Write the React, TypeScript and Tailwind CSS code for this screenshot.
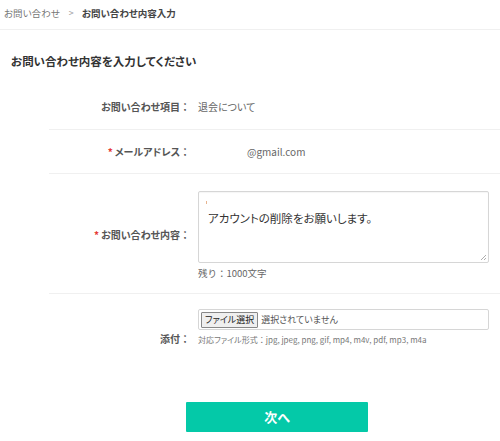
import React from "react";

function Colon() {
  return <span className="[font-feature-settings:normal]">：</span>;
}

export default function App() {
  return (
    <div className="w-[500px] h-[441px] bg-white overflow-hidden text-[#555] font-['Noto_Sans_CJK_JP','Noto_Sans',sans-serif] [font-feature-settings:'palt']">
      <div className="h-[30px] border-b border-[#f0f0f0] flex items-center pl-[4px] pb-[3px] text-[9.5px]">
        <span className="text-[#777]">お問い合わせ</span>
        <span className="text-[#999] ml-[9px] mr-[8px] text-[9px]">&gt;</span>
        <span className="font-bold text-[#444]">お問い合わせ内容入力</span>
      </div>
      <div className="h-[52px] flex items-end pl-[11px] pb-[15px]">
        <h1 className="text-[11.5px] font-bold text-[#333] leading-none">お問い合わせ内容を入力してください</h1>
      </div>
      <div className="ml-[49px]">
        <div className="h-[48px] flex items-center pt-[2px] border-b border-[#f0f0f0]">
          <div className="w-[141px] text-right text-[10px] font-bold text-[#555]">お問い合わせ項目<Colon /></div>
          <div className="ml-[8px] text-[10px] text-[#666]">退会について</div>
        </div>
        <div className="h-[44px] flex items-center border-b border-[#f0f0f0]">
          <div className="w-[141px] text-right text-[10px] font-bold text-[#555]">
            <span className="text-[#e53935] mr-[2px]">*</span>メールアドレス<Colon />
          </div>
          <div className="ml-[8px] pl-[49px] text-[10px] text-[#666]">@gmail.com</div>
        </div>
        <div className="h-[120px] flex items-center border-b border-[#f0f0f0]">
          <div className="w-[141px] text-right text-[10px] font-bold text-[#555] pt-[2px]">
            <span className="text-[#e53935] mr-[2px]">*</span>お問い合わせ内容<Colon />
          </div>
          <div className="ml-[8px] w-[291px] pt-[4px]">
            <div className="relative h-[72px] border border-[#d6d6d6] rounded-[2px] shadow-[inset_0_1px_1px_rgba(0,0,0,0.04)]">
              <div className="absolute left-[7px] top-[9px] w-[1px] h-[3px] bg-[#e8b48f]" />
              <div className="pl-[9px] pt-[19px] text-[11.5px] text-[#333] leading-[14px]">アカウントの削除をお願いします。</div>
              <svg className="absolute right-[1px] bottom-[1px]" width="7" height="7" viewBox="0 0 7 7">
                <path d="M6 1 L1 6 M6 4 L4 6" stroke="#999" strokeWidth="0.8" />
              </svg>
            </div>
            <div className="mt-[3px] text-[9.5px] text-[#666] leading-[14px] [font-feature-settings:normal]">残り：1000文字</div>
          </div>
        </div>
        <div className="h-[88px] flex items-start pt-[15px]">
          <div className="w-[141px] text-right text-[10px] font-bold text-[#555] pt-[22px]">添付<Colon /></div>
          <div className="ml-[8px] w-[291px]">
            <div className="h-[21px] border border-[#d6d6d6] rounded-[2px] flex items-center pl-[2px]">
              <span className="h-[16px] px-[3px] border border-[#888] bg-[#efefef] rounded-[1px] text-[9px] text-[#222] leading-[14px]">ファイル選択</span>
              <span className="ml-[3px] text-[9px] text-[#555]">選択されていません</span>
            </div>
            <div className="mt-[4px] text-[8px] text-[#777] leading-[12px]">対応ファイル形式<Colon />jpg, jpeg, png, gif, mp4, m4v, pdf, mp3, m4a</div>
          </div>
        </div>
      </div>
      <div className="flex justify-center pt-[20px] pl-[54px]">
        <button className="w-[182px] h-[30px] bg-[#04c9a8] text-white font-bold text-[13px] rounded-[1px]">次へ</button>
      </div>
    </div>
  );
}
